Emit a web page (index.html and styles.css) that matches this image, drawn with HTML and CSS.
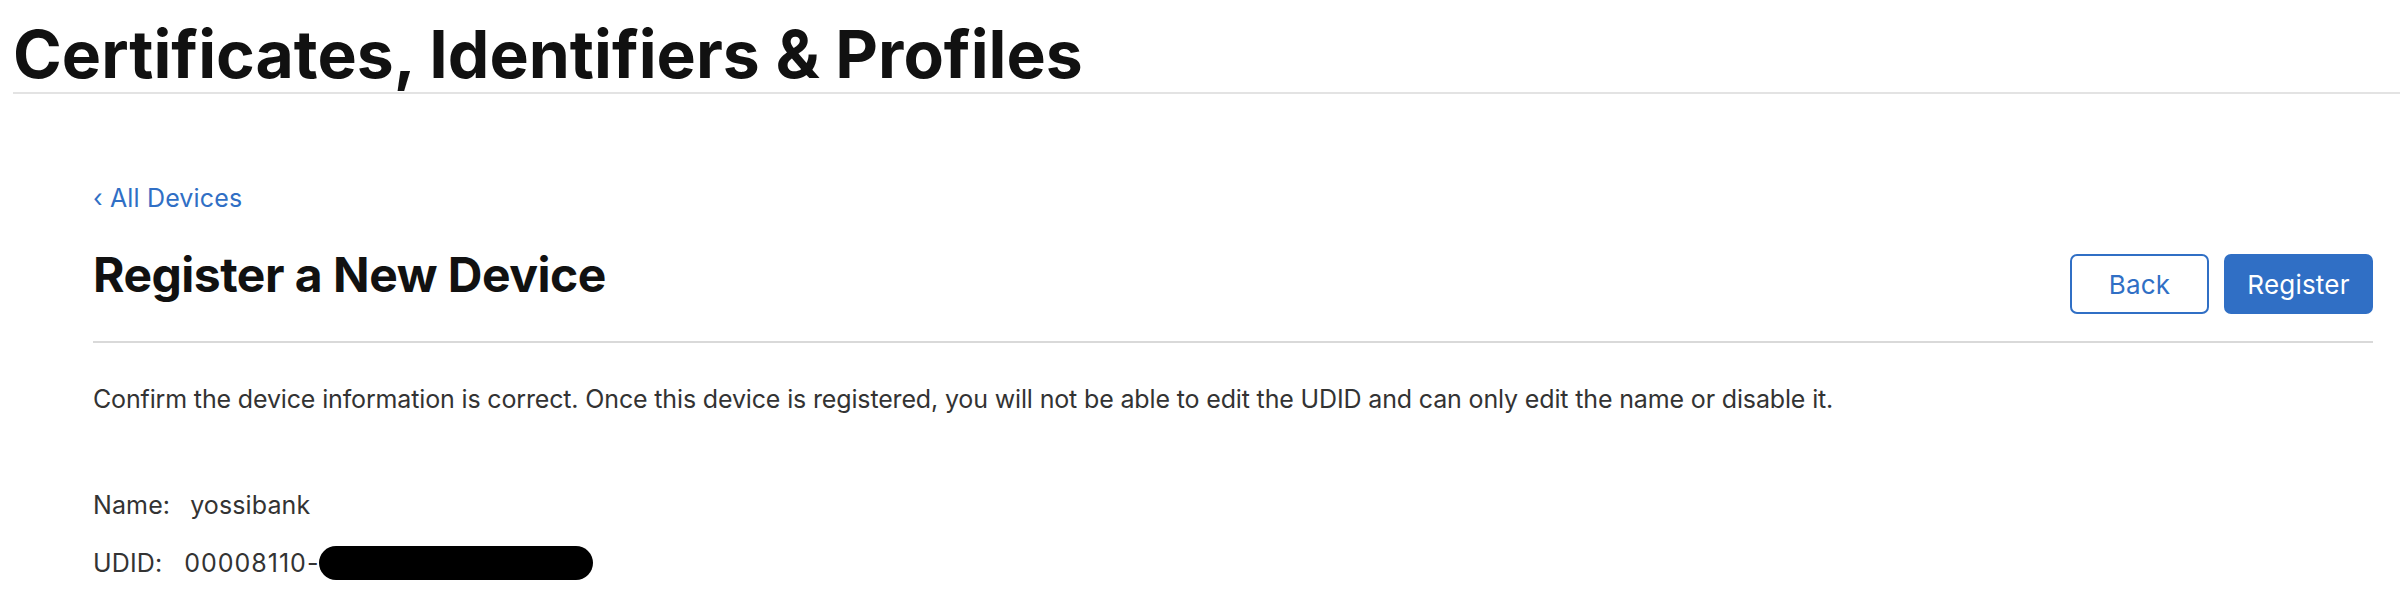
FILE: index.html
```html
<!DOCTYPE html>
<html lang="en">
<head>
<meta charset="utf-8">
<title>Certificates, Identifiers &amp; Profiles</title>
<link rel="stylesheet" href="styles.css">
</head>
<body>
<header class="site-header">
  <h1 class="site-title">Certificates, Identifiers &amp; Profiles</h1>
</header>
<main class="content">
  <a class="back-link" href="#"><span class="chev">‹</span> All Devices</a>
  <div class="title-row">
    <h2 class="page-title">Register a New Device</h2>
    <div class="actions">
      <button class="btn btn-outline">Back</button>
      <button class="btn btn-primary">Register</button>
    </div>
  </div>
  <p class="intro">Confirm the device information is correct. Once this device is registered, you will not be able to edit the UDID and can only edit the name or disable it.</p>
  <dl class="details">
    <div class="detail-row"><dt>Name:</dt><dd>yossibank</dd></div>
    <div class="detail-row"><dt>UDID:</dt><dd class="udid">00008110-<span class="redacted"></span></dd></div>
  </dl>
</main>
</body>
</html>
```
FILE: styles.css
```css
* { box-sizing: border-box; }
html, body { margin: 0; padding: 0; background: #fff; }
body {
  font-family: Inter, "Noto Sans", "Liberation Sans", sans-serif;
  color: #333;
  width: 2400px;
}
.site-header {
  margin-left: 13px;
  padding-top: 17px;
  padding-bottom: 1px;
  border-bottom: 2px solid #e3e3e3;
}
.site-title {
  margin: 0;
  font-size: 66px;
  line-height: 74px;
  font-weight: 700;
  color: #111;
  letter-spacing: 0;
}
.content {
  margin-left: 93px;
  width: 2280px;
  padding-top: 89px;
}
.back-link {
  display: block;
  font-size: 25px;
  line-height: 31px;
  letter-spacing: 0.15px;
  color: #306fc5;
  text-decoration: none;
}
.title-row {
  display: flex;
  justify-content: space-between;
  align-items: flex-start;
  margin-top: 32px;
  padding-bottom: 27px;
  border-bottom: 2px solid #d9d9d9;
}
.page-title {
  margin: 0;
  font-size: 48px;
  line-height: 58px;
  font-weight: 700;
  color: #111;
  letter-spacing: -0.5px;
}
.actions {
  display: flex;
  gap: 15px;
  margin-top: 8px;
}
.btn {
  font-family: inherit;
  font-size: 26px;
  letter-spacing: 0.2px;
  height: 60px;
  border-radius: 7px;
  border: 2px solid #306fc5;
  cursor: pointer;
  padding: 0;
}
.btn-outline {
  width: 139px;
  background: #fff;
  color: #306fc5;
}
.btn-primary {
  width: 149px;
  background: #306fc5;
  color: #fff;
}
.intro {
  margin: 41px 0 0;
  font-size: 25px;
  line-height: 30px;
  letter-spacing: -0.15px;
  color: #333;
}
.details {
  margin: 76px 0 0;
  font-size: 25px;
  line-height: 30px;
  letter-spacing: 0.12px;
}
.detail-row {
  display: flex;
  align-items: center;
}
.detail-row + .detail-row { margin-top: 26px; }
.details dt { margin-right: 20px; }
.details dd { margin: 0; display: flex; align-items: center; }
.details .udid { margin-left: 2px; letter-spacing: 1px; }
.redacted {
  display: inline-block;
  width: 274px;
  height: 34px;
  border-radius: 17px;
  background: #000;
}
```
